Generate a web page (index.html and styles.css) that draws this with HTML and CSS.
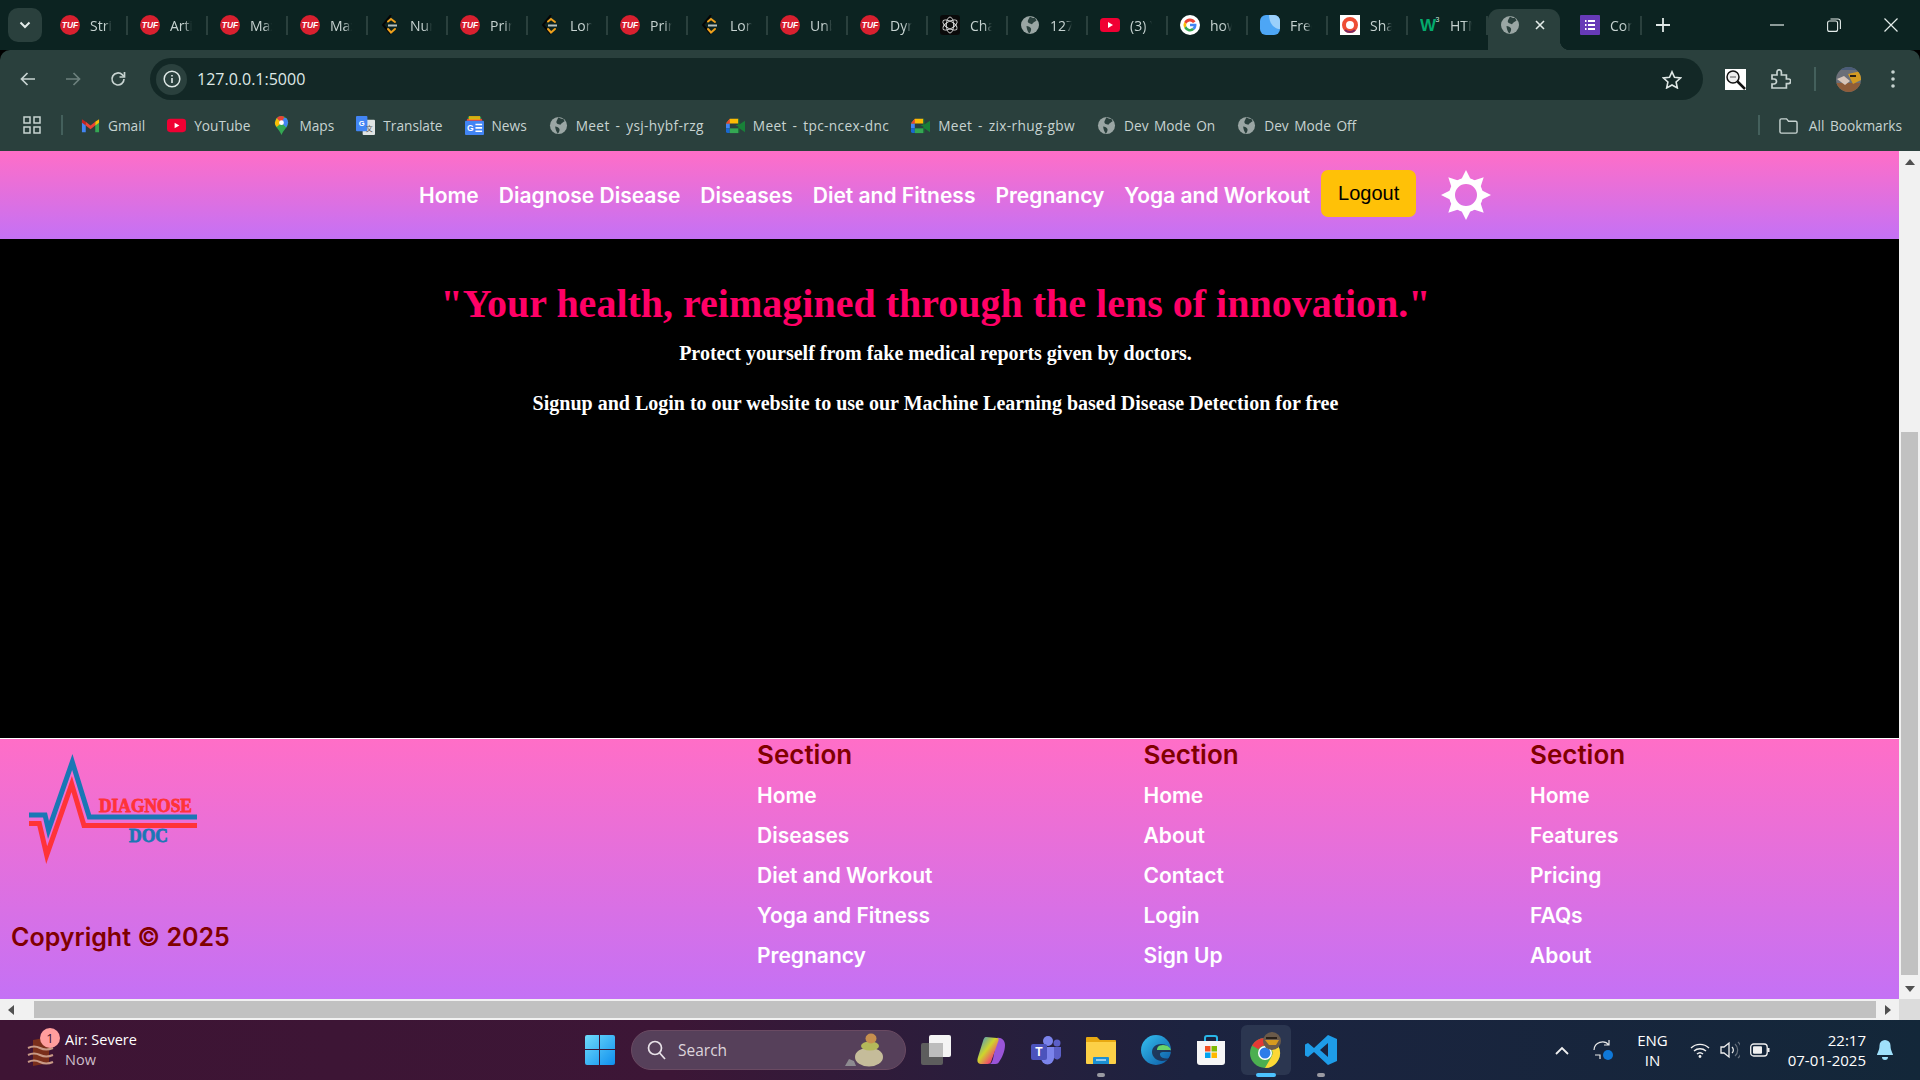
FILE: index.html
```html
<!DOCTYPE html>
<html lang="en">
<head>
<meta charset="utf-8">
<title>Diagnose Doc</title>
<link rel="stylesheet" href="styles.css">
</head>
<body>
<svg class="defs" width="0" height="0" aria-hidden="true">
  <symbol id="tuf" viewBox="0 0 20 20"><circle cx="10" cy="10" r="10" fill="#d8202f"/><text x="10" y="13" text-anchor="middle" font-family="Liberation Sans" font-weight="700" font-style="italic" font-size="8.500" fill="#fff">TUF</text></symbol>
  <symbol id="lc" viewBox="0 0 20 20"><path d="M11 0 3 10l8 9" fill="none" stroke="#050505" stroke-width="2"/><path d="M8 6.500l3-2.500 4 3M8 14l3 3.500 4-3.500" fill="none" stroke="#f0a11c" stroke-width="2" stroke-linecap="round"/><path d="M8 10.500h9" stroke="#b9c2c0" stroke-width="2"/></symbol>
  <symbol id="globe" viewBox="0 0 20 20"><circle cx="10" cy="10" r="9" fill="#9aa6a4"/><path d="M10 1.400c2 1.500 3.600 1.800 5 1.600l1.500 2.500c-2 1.300-3.600 2-4.500 3.800-1-.7-2.800-.5-3.800-1.800C7 6 9 3.600 10 1.400zM6.500 11c2 .2 3.800 1 4.500 2.600.5 1.800-.6 3.600-1.700 5C7.600 16.600 6.600 13.500 6.500 11z" fill="#2a403d"/></symbol>
  <symbol id="yt" viewBox="0 0 20 20"><rect y="3" width="20" height="14" rx="3.500" fill="#f00033"/><path d="M8 7l5 3-5 3z" fill="#fff"/></symbol>
  <symbol id="google" viewBox="0 0 20 20"><circle cx="10" cy="10" r="10" fill="#fff"/><path d="M15.500 6.600A6.500 6.500 0 0 0 4.200 7l2.200 1.700A3.800 3.800 0 0 1 13 8z" fill="#ea4335"/><path d="M4.200 7a6.500 6.500 0 0 0 0 6l2.200-1.800a3.800 3.800 0 0 1 0-2.500z" fill="#fbbc05"/><path d="M4.200 13a6.500 6.500 0 0 0 10.200 1.800l-2.100-1.700A3.800 3.800 0 0 1 6.400 11.200z" fill="#34a853"/><path d="M16.400 8.700H10v2.600h3.700a3.400 3.400 0 0 1-1.400 1.800l2.100 1.700c1.500-1.400 2.400-3.600 2-6.100z" fill="#4285f4"/></symbol>
  <symbol id="gpt" viewBox="0 0 20 20"><rect width="20" height="20" rx="3" fill="#0a0a0a"/><g fill="none" stroke="#dcdcdc" stroke-width=".9"><ellipse cx="10" cy="10" rx="3.600" ry="8"/><ellipse cx="10" cy="10" rx="3.600" ry="8" transform="rotate(60 10 10)"/><ellipse cx="10" cy="10" rx="3.600" ry="8" transform="rotate(120 10 10)"/></g></symbol>
  <symbol id="fre" viewBox="0 0 20 20"><rect width="20" height="20" rx="6" fill="#4da6f5"/><path d="M9 0h5a6 6 0 0 1 6 6v8c-6 0-11-6-11-14z" fill="#9bd0fb"/></symbol>
  <symbol id="sha" viewBox="0 0 20 20"><rect width="20" height="20" fill="#fff"/><circle cx="10" cy="10" r="6" fill="none" stroke="#ee4e34" stroke-width="4"/><path d="M5 15a7 7 0 0 0 10 0" fill="none" stroke="#7d2a63" stroke-width="2"/></symbol>
  <symbol id="w3" viewBox="0 0 20 20"><text x="0" y="16" font-family="Liberation Sans" font-weight="700" font-size="17" fill="#04aa6d">W</text><text x="15.500" y="7" font-family="Liberation Sans" font-size="7" fill="#cfe8df">3</text></symbol>
  <symbol id="forms" viewBox="0 0 20 20"><rect width="20" height="20" rx="1" fill="#673ab7"/><path d="M8 6h7M8 10h7M8 14h7M5 6h1.500M5 10h1.500M5 14h1.500" stroke="#fff" stroke-width="1.800"/></symbol>
  <symbol id="gmail" viewBox="0 0 20 20"><path d="M1 5v12h4V9z" fill="#4285f4"/><path d="M15 9v8h4V5z" fill="#34a853"/><path d="M1 3.500 5 6v4L1 7z" fill="#c5221f"/><path d="M5 6l5 4 5-4v4l-5 4-5-4z" fill="#ea4335"/><path d="M15 6l4-2.500V7l-4 3z" fill="#fbbc04"/></symbol>
  <symbol id="maps" viewBox="0 0 20 20"><path d="M10 0a7 7 0 0 0-7 7c0 5 5 7 7 13 2-6 7-8 7-13a7 7 0 0 0-7-7z" fill="#34a853"/><path d="M5 2 15 12l2-5a7 7 0 0 0-2-5z" fill="#4285f4"/><path d="M5 2 3 7c0 2 1 3 2 4.500L10 7z" fill="#fbbc04"/><path d="M5 2a7 7 0 0 1 8-1L10 7z" fill="#ea4335"/><circle cx="10" cy="7" r="2.500" fill="#fff"/></symbol>
  <symbol id="translate" viewBox="0 0 20 20"><rect x="7" y="4" width="13" height="16" rx="1" fill="#dfe3e3"/><rect width="12" height="16" rx="1" fill="#4285f4"/><text x="6" y="11" text-anchor="middle" font-family="Liberation Sans" font-weight="700" font-size="8" fill="#fff">G</text><text x="14" y="16" text-anchor="middle" font-family="Noto Sans CJK SC" font-size="7" fill="#555">文</text></symbol>
  <symbol id="news" viewBox="0 0 20 20"><path d="M3 1h14v5H3z" fill="#0c9d58"/><path d="M2 3h16v5H2z" fill="#ea4335"/><path d="M4 0h12v4H4z" fill="#fbbc04" opacity=".8"/><rect y="5" width="20" height="15" rx="1" fill="#4285f4"/><text x="5.500" y="16" text-anchor="middle" font-family="Liberation Sans" font-weight="700" font-size="9" fill="#fff">G</text><path d="M11 9h7M11 12.500h7M11 16h7" stroke="#fff" stroke-width="1.600"/></symbol>
  <symbol id="meet" viewBox="0 0 20 20"><path d="M4 3h9v5H0z" fill="#fbbc04"/><path d="M0 8h4v5H0z" fill="#4285f4"/><path d="M0 13h4v5H2a2 2 0 0 1-2-2z" fill="#1967d2"/><path d="M4 13h9v5H4z" fill="#34a853"/><path d="M13 3v6l-3 1 3 1v7a1 1 0 0 0 1-1v-4l6 4V5l-6 4V4a1 1 0 0 0-1-1z" fill="#188038"/><path d="M4 3 0 8h4z" fill="#ea4335"/></symbol>
</svg>

<div class="browser">
  <header class="tabstrip">
    <button class="tab-menu" type="button"><svg width="12" height="8" viewBox="0 0 12 8"><path d="M1.500 1.500 6 6l4.500-4.500" fill="none" stroke="#e4ecea" stroke-width="2"/></svg></button>
    <div class="tab"><svg class="fav"><use href="#tuf"/></svg><span class="tab-title">Striver</span></div>
    <div class="tab"><svg class="fav"><use href="#tuf"/></svg><span class="tab-title">Articles</span></div>
    <div class="tab"><svg class="fav"><use href="#tuf"/></svg><span class="tab-title">Maximum</span></div>
    <div class="tab"><svg class="fav"><use href="#tuf"/></svg><span class="tab-title">Maximum</span></div>
    <div class="tab"><svg class="fav"><use href="#lc"/></svg><span class="tab-title">Number</span></div>
    <div class="tab"><svg class="fav"><use href="#tuf"/></svg><span class="tab-title">Print</span></div>
    <div class="tab"><svg class="fav"><use href="#lc"/></svg><span class="tab-title">Longest</span></div>
    <div class="tab"><svg class="fav"><use href="#tuf"/></svg><span class="tab-title">Print</span></div>
    <div class="tab"><svg class="fav"><use href="#lc"/></svg><span class="tab-title">Longest</span></div>
    <div class="tab"><svg class="fav"><use href="#tuf"/></svg><span class="tab-title">Unbounded</span></div>
    <div class="tab"><svg class="fav"><use href="#tuf"/></svg><span class="tab-title">Dynamic</span></div>
    <div class="tab"><svg class="fav"><use href="#gpt"/></svg><span class="tab-title">ChatGPT</span></div>
    <div class="tab"><svg class="fav"><use href="#globe"/></svg><span class="tab-title">127.0.0.1</span></div>
    <div class="tab"><svg class="fav"><use href="#yt"/></svg><span class="tab-title">(3) YouTube</span></div>
    <div class="tab"><svg class="fav"><use href="#google"/></svg><span class="tab-title">how to</span></div>
    <div class="tab"><svg class="fav"><use href="#fre"/></svg><span class="tab-title">Free</span></div>
    <div class="tab"><svg class="fav"><use href="#sha"/></svg><span class="tab-title">Share</span></div>
    <div class="tab"><svg class="fav"><use href="#w3"/></svg><span class="tab-title">HTML</span></div>
    <div class="tab tab-active"><svg class="fav"><use href="#globe"/></svg><svg class="tab-close" width="10" height="10" viewBox="0 0 10 10"><path d="M1 1l8 8M9 1 1 9" stroke="#e4ecea" stroke-width="1.600"/></svg></div>
    <div class="tab tab-last"><svg class="fav"><use href="#forms"/></svg><span class="tab-title">Contact</span></div>
    <svg class="new-tab" width="14" height="14" viewBox="0 0 14 14"><path d="M7 0v14M0 7h14" stroke="#dfe8e6" stroke-width="1.800"/></svg>
    <div class="win-controls">
      <svg width="14" height="14" viewBox="0 0 14 14"><path d="M0 7h14" stroke="#e4ecea" stroke-width="1.200"/></svg>
      <svg width="14" height="14" viewBox="0 0 14 14"><rect x=".6" y="3" width="10" height="10.400" rx="2" fill="none" stroke="#e4ecea" stroke-width="1.100"/><path d="M3.500 1h7.500a2.400 2.400 0 0 1 2.400 2.400V11" fill="none" stroke="#e4ecea" stroke-width="1.100"/></svg>
      <svg width="14" height="14" viewBox="0 0 14 14"><path d="M.5.500l13 13M13.500.500l-13 13" stroke="#e4ecea" stroke-width="1.200"/></svg>
    </div>
  </header>

  <div class="toolbar">
    <svg class="tool-back" width="16" height="14" viewBox="0 0 16 14"><path d="M15 7H2M7.500 1 1.500 7l6 6" fill="none" stroke="#c7d3d1" stroke-width="1.700"/></svg>
    <svg class="tool-fwd" width="16" height="14" viewBox="0 0 16 14"><path d="M1 7h13M8.500 1l6 6-6 6" fill="none" stroke="#6d807d" stroke-width="1.700"/></svg>
    <svg class="tool-reload" width="16" height="16" viewBox="0 0 16 16"><path d="M14 8a6 6 0 1 1-1.800-4.300L14 5.500" fill="none" stroke="#c7d3d1" stroke-width="1.700"/><path d="M14.500 1v5h-5" fill="none" stroke="#c7d3d1" stroke-width="1.700"/></svg>
    <div class="omnibox">
      <span class="info-chip"><svg width="18" height="18" viewBox="0 0 18 18"><circle cx="9" cy="9" r="7.800" fill="none" stroke="#dfe8e6" stroke-width="1.500"/><path d="M9 8v5M9 5v1.600" stroke="#dfe8e6" stroke-width="1.600"/></svg></span>
      <span class="url">127.0.0.1:5000</span>
      <svg class="star" width="20" height="19" viewBox="0 0 20 19"><path d="M10 1.800l2.500 5.500 6 .7-4.400 4 1.200 5.900L10 15l-5.300 2.900 1.200-5.900-4.400-4 6-.7z" fill="none" stroke="#dfe8e6" stroke-width="1.600"/></svg>
    </div>
    <svg class="ext-lens" width="21" height="21" viewBox="0 0 21 21"><rect width="21" height="21" fill="#fff"/><circle cx="8" cy="8" r="6" fill="#eee" stroke="#111" stroke-width="1.500"/><path d="M12.500 12.500 20 20" stroke="#111" stroke-width="2.500"/><path d="M5 8h6" stroke="#555"/></svg>
    <svg class="ext-puzzle" width="20" height="20" viewBox="0 0 20 20"><path d="M1 6h5V3a2.200 2.200 0 0 1 4.400 0v3h5v4h2a2.300 2.300 0 0 1 0 4.600h-2V19H1v-4h2a2.500 2.500 0 0 0 0-5H1z" fill="none" stroke="#c7d3d1" stroke-width="1.700"/></svg>
    <span class="tool-sep"></span>
    <svg class="avatar" width="25" height="25" viewBox="0 0 25 25"><defs><clipPath id="av"><circle cx="12.500" cy="12.500" r="12.500"/></clipPath></defs><g clip-path="url(#av)"><rect width="25" height="25" fill="#6b6f78"/><path d="M0 16h25v9H0z" fill="#8f5d3a"/><path d="M12 7l13-3v9l-8 4z" fill="#d39a22"/><path d="M1 12l7-3 6 5-5 4z" fill="#d8c6ba"/><path d="M14 8h6v2h-6z" fill="#2a2018"/><path d="M5 0h15v3H5z" fill="#4a5c78"/></g></svg>
    <svg class="tool-dots" width="4" height="18" viewBox="0 0 4 18"><circle cx="2" cy="2" r="1.800" fill="#c7d3d1"/><circle cx="2" cy="9" r="1.800" fill="#c7d3d1"/><circle cx="2" cy="16" r="1.800" fill="#c7d3d1"/></svg>
  </div>

  <nav class="bookmarks">
    <svg class="bm-apps" width="18" height="18" viewBox="0 0 18 18"><path d="M1 1h6v6H1zM11 1h6v6h-6zM1 11h6v6H1zM11 11h6v6h-6z" fill="none" stroke="#c7d3d1" stroke-width="1.500"/></svg>
    <span class="bm-sep"></span>
    <a class="bm"><svg class="bm-ic"><use href="#gmail"/></svg>Gmail</a>
    <a class="bm"><svg class="bm-ic"><use href="#yt"/></svg>YouTube</a>
    <a class="bm"><svg class="bm-ic"><use href="#maps"/></svg>Maps</a>
    <a class="bm"><svg class="bm-ic"><use href="#translate"/></svg>Translate</a>
    <a class="bm"><svg class="bm-ic"><use href="#news"/></svg>News</a>
    <a class="bm bm-meet"><svg class="bm-ic"><use href="#globe"/></svg>Meet - ysj-hybf-rzg</a>
    <a class="bm bm-meet"><svg class="bm-ic"><use href="#meet"/></svg>Meet - tpc-ncex-dnc</a>
    <a class="bm bm-meet"><svg class="bm-ic"><use href="#meet"/></svg>Meet - zix-rhug-gbw</a>
    <a class="bm"><svg class="bm-ic"><use href="#globe"/></svg>Dev Mode On</a>
    <a class="bm"><svg class="bm-ic"><use href="#globe"/></svg>Dev Mode Off</a>
    <span class="bm-sep bm-sep-end"></span>
    <a class="bm bm-all"><svg class="bm-ic" viewBox="0 0 20 18"><path d="M1 3.500A1.500 1.500 0 0 1 2.500 2H8l2 2.500h7.500A1.500 1.500 0 0 1 19 6v9.500a1.500 1.500 0 0 1-1.500 1.500h-15A1.500 1.500 0 0 1 1 15.500z" fill="none" stroke="#c7d3d1" stroke-width="1.500"/></svg>All Bookmarks</a>
  </nav>

  <div class="viewport">
    <div class="viewport-row">
      <main class="page">
        <div class="site-nav">
          <a class="nav-link">Home</a>
          <a class="nav-link">Diagnose Disease</a>
          <a class="nav-link">Diseases</a>
          <a class="nav-link">Diet and Fitness</a>
          <a class="nav-link">Pregnancy</a>
          <a class="nav-link">Yoga and Workout</a>
          <button class="logout" type="button">Logout</button>
          <svg class="sun" width="50" height="50" viewBox="0 0 50 50">
            <g fill="#fff">
              <path d="M25 0l5 10H20z"/><path d="M25 50l5-10H20z"/><path d="M0 25l10-5v10z"/><path d="M50 25l-10-5v10z"/>
              <path d="M7.300 7.300l10.600 3.500-7.100 7.100z"/><path d="M42.700 7.300l-3.500 10.600-7.100-7.100z"/><path d="M7.300 42.700l3.500-10.600 7.100 7.100z"/><path d="M42.700 42.700l-10.600-3.500 7.100-7.100z"/>
            </g>
            <circle cx="25" cy="25" r="14" fill="none" stroke="#fff" stroke-width="6"/>
          </svg>
        </div>
        <section class="hero">
          <h1 class="hero-title">"Your health, reimagined through the lens of innovation."</h1>
          <p class="hero-text">Protect yourself from fake medical reports given by doctors.</p>
          <p class="hero-text">Signup and Login to our website to use our Machine Learning based Disease Detection for free</p>
        </section>
        <footer class="site-footer">
          <div class="foot-brand">
            <svg class="logo" width="168" height="108" viewBox="0 0 168 108">
              <polyline class="logo-line" points="0,61 16,61 19.500,76 43.300,8 60.300,63 168,63" stroke="#1a77b5"/>
              <polyline class="logo-line" points="0,69.500 10.300,69.500 17.700,101 42.700,30 55,71.500 168,71.500" stroke="#ff3338"/>
              <text class="logo-a" x="70" y="58" textLength="93" lengthAdjust="spacingAndGlyphs">DIAGNOSE</text>
              <text class="logo-b" x="100" y="88" textLength="39" lengthAdjust="spacingAndGlyphs">DOC</text>
            </svg>
            <p class="copyright">Copyright © 2025</p>
          </div>
          <div class="foot-col">
            <h3 class="foot-head">Section</h3>
            <a class="foot-link">Home</a><a class="foot-link">Diseases</a><a class="foot-link">Diet and Workout</a><a class="foot-link">Yoga and Fitness</a><a class="foot-link">Pregnancy</a>
          </div>
          <div class="foot-col">
            <h3 class="foot-head">Section</h3>
            <a class="foot-link">Home</a><a class="foot-link">About</a><a class="foot-link">Contact</a><a class="foot-link">Login</a><a class="foot-link">Sign Up</a>
          </div>
          <div class="foot-col">
            <h3 class="foot-head">Section</h3>
            <a class="foot-link">Home</a><a class="foot-link">Features</a><a class="foot-link">Pricing</a><a class="foot-link">FAQs</a><a class="foot-link">About</a>
          </div>
        </footer>
      </main>
      <div class="vscroll">
        <span class="arrow-up"></span>
        <div class="vtrack"><div class="vthumb"></div></div>
        <span class="arrow-down"></span>
      </div>
    </div>
    <div class="hscroll">
      <span class="arrow-left"></span>
      <div class="hthumb"></div>
      <span class="arrow-right"></span>
      <span class="corner"></span>
    </div>
  </div>

  <footer class="taskbar">
    <div class="weather">
      <span class="weather-ic">
        <svg width="28" height="34" viewBox="0 0 28 34"><path d="M6 5 22 2v26L6 31z" fill="#7a2f1b"/><path d="M1 13q6-3 12 0t13 0M1 20q6-3 12 0t13 0M1 27q6-3 12 0t13 0" fill="none" stroke="#c99a86" stroke-width="2"/></svg>
        <b class="badge">1</b>
      </span>
      <span class="weather-text"><span class="w1">Air: Severe</span><span class="w2">Now</span></span>
    </div>
    <div class="tb-center">
      <svg class="start" width="30" height="30" viewBox="0 0 30 30"><defs><linearGradient id="wg" x1="0" y1="0" x2="1" y2="1"><stop offset="0" stop-color="#6fdcfb"/><stop offset="1" stop-color="#0f8fee"/></linearGradient></defs><path d="M0 2a2 2 0 0 1 2-2h12v14H0zM15 0h13a2 2 0 0 1 2 2v12H15zM0 15h14v15H2a2 2 0 0 1-2-2zM15 15h15v13a2 2 0 0 1-2 2H15z" fill="url(#wg)"/></svg>
      <div class="searchbox">
        <svg width="19" height="20" viewBox="0 0 19 20"><circle cx="8" cy="8" r="6.500" fill="none" stroke="#e8e2e8" stroke-width="1.700"/><path d="M12.700 13 18 19" stroke="#e8e2e8" stroke-width="1.700"/></svg>
        <span class="search-label">Search</span>
        <svg class="pebbles" width="42" height="34" viewBox="0 0 42 34"><ellipse cx="26" cy="24" rx="14" ry="9.500" fill="#c5bc9a"/><ellipse cx="27" cy="13" rx="9" ry="4.500" fill="#b4b85a"/><ellipse cx="28" cy="5.500" rx="5.500" ry="5" fill="#c68f4e"/><path d="M2 33l4-7 5 2 2 5z" fill="#8d8a90"/></svg>
      </div>
      <span class="tb-app"><svg width="30" height="30" viewBox="0 0 30 30"><rect y="8" width="22" height="22" rx="2" fill="#5d5d5d"/><rect x="8" width="22" height="22" rx="2" fill="#f4f4f4"/><rect x="8" y="8" width="14" height="14" fill="#bdbdbd"/></svg></span>
      <span class="tb-app"><svg width="30" height="30" viewBox="0 0 30 30"><defs><linearGradient id="cp" x1="0" y1="0" x2="1" y2="1"><stop offset="0" stop-color="#2b8be8"/><stop offset=".45" stop-color="#cfd52c"/><stop offset=".75" stop-color="#f04a6c"/><stop offset="1" stop-color="#f08a3c"/></linearGradient></defs><path d="M21 3c4-1 8 2 8 7 0 6-3 13-6 17-1 2-3 2-5 2h-5c3 0 3-3 4-5z" fill="#9a55d8"/><path d="M21 3c2 0 2 2 1 4l-7 20c-1 2-3 2-5 2H5c-4 0-4-4-3-7L7 6c.5-2 1.500-4 3-4z" fill="url(#cp)"/></svg></span>
      <span class="tb-app"><svg width="30" height="30" viewBox="0 0 30 30"><circle cx="17" cy="6" r="5" fill="#7b83eb"/><circle cx="26" cy="8" r="3.500" fill="#5b5fc7"/><path d="M10 12h13v11a6.500 6.500 0 0 1-13 0z" fill="#7b83eb"/><path d="M23 12h7v9a4 4 0 0 1-7 2z" fill="#5b5fc7"/><rect y="9" width="16" height="16" rx="2" fill="#4b53bc"/><text x="8" y="21" text-anchor="middle" font-family="Liberation Sans" font-weight="700" font-size="12" fill="#fff">T</text></svg></span>
      <span class="tb-app tb-dot"><svg width="30" height="30" viewBox="0 0 30 30"><path d="M0 3a1 1 0 0 1 1-1h10l3 3h15a1 1 0 0 1 1 1v4H0z" fill="#e8a912"/><path d="M0 7h30v21a1 1 0 0 1-1 1H1a1 1 0 0 1-1-1z" fill="#fcd047"/><path d="M8 22h14a1 1 0 0 1 1 1v6H7v-6a1 1 0 0 1 1-1z" fill="#1b8fd2"/><path d="M10 25h10" stroke="#bfe2f7" stroke-width="1.500"/></svg></span>
      <span class="tb-app"><svg width="30" height="30" viewBox="0 0 30 30"><defs><linearGradient id="ed" x1="0" y1="0" x2="1" y2="1"><stop offset="0" stop-color="#35c1f1"/><stop offset="1" stop-color="#0c59a4"/></linearGradient></defs><circle cx="15" cy="15" r="15" fill="url(#ed)"/><path d="M30 17c0-5-5-8-10-8-6 0-9 4-9 8 0 5 5 9 10 9 3 0 6-1 8-3-3 1-9 1-10-3-.5-2 1-3 3-3z" fill="#1f2a4a" opacity=".85"/><path d="M30 16c0-3-3-6-8-6s-6 3-6 5h14z" fill="#6ad46a"/></svg></span>
      <span class="tb-app"><svg width="30" height="30" viewBox="0 0 30 30"><path d="M9 7V3a2 2 0 0 1 2-2h8a2 2 0 0 1 2 2v4" fill="none" stroke="#29b6e8" stroke-width="2"/><path d="M1 6h28v21a3 3 0 0 1-3 3H4a3 3 0 0 1-3-3z" fill="#f6f6f6"/><rect x="9" y="11" width="5.500" height="5.500" fill="#f25022"/><rect x="15.500" y="11" width="5.500" height="5.500" fill="#7fba00"/><rect x="9" y="17.500" width="5.500" height="5.500" fill="#00a4ef"/><rect x="15.500" y="17.500" width="5.500" height="5.500" fill="#ffb900"/></svg></span>
      <span class="tb-app tb-chrome"><svg width="32" height="36" viewBox="0 0 32 36"><circle cx="15" cy="21" r="15" fill="#4caf50"/><path d="M15 6a15 15 0 0 1 13 7.500H15a7.500 7.500 0 0 0-6.500 3.800L2 13.500A15 15 0 0 1 15 6z" fill="#e53935"/><path d="M28 13.500A15 15 0 0 1 15 36l6.500-11.300A7.500 7.500 0 0 0 21.500 17z" fill="#fdd835"/><circle cx="15" cy="21" r="7" fill="#fff"/><circle cx="15" cy="21" r="5.500" fill="#2b7de9"/><circle cx="22" cy="9" r="9" fill="#6a5a4a"/><path d="M15 8h14l-3 5h-7z" fill="#d69a1f"/><path d="M16 5h11v2H16z" fill="#2a2018"/></svg></span>
      <span class="tb-app tb-dot"><svg width="32" height="32" viewBox="0 0 32 32"><path d="M23 1 32 5v22l-9 4-14-13-6 5-3-1.500V10.500L3 9l6 5zM23 9l-8 7 8 7z" fill="#1e9ce8"/></svg></span>
    </div>
    <div class="tray">
      <svg class="t-chev" width="14" height="9" viewBox="0 0 14 9"><path d="M1 8l6-6 6 6" fill="none" stroke="#f0f0f0" stroke-width="1.800"/></svg>
      <svg class="t-sync" width="22" height="22" viewBox="0 0 22 22"><path d="M2 11a8.500 8.500 0 0 1 15-5M17 1v5h-5M3 16h5v4" fill="none" stroke="#e8e8e8" stroke-width="1.200"/><circle cx="16" cy="16" r="5" fill="#0f78d8"/></svg>
      <span class="t-lang"><span>ENG</span><span>IN</span></span>
      <svg class="t-ic" width="20" height="16" viewBox="0 0 20 16"><path d="M1 6a13 13 0 0 1 18 0M4 9a9 9 0 0 1 12 0M7 12a4.500 4.500 0 0 1 6 0" fill="none" stroke="#f0f0f0" stroke-width="1.400"/><circle cx="10" cy="14.500" r="1.400" fill="#f0f0f0"/></svg>
      <svg class="t-ic" width="20" height="18" viewBox="0 0 20 18"><path d="M1 6h3l5-4v14l-5-4H1z" fill="none" stroke="#f0f0f0" stroke-width="1.300"/><path d="M12 6a4 4 0 0 1 0 6" fill="none" stroke="#f0f0f0" stroke-width="1.200"/><path d="M15 3a8 8 0 0 1 0 12M18 1a11 11 0 0 1 0 16" fill="none" stroke="#66707c" stroke-width="1.200"/></svg>
      <svg class="t-ic" width="20" height="14" viewBox="0 0 20 14"><rect x=".7" y="1" width="16.500" height="12" rx="3" fill="none" stroke="#f0f0f0" stroke-width="1.300"/><rect x="3" y="3.300" width="9" height="7.400" rx="1" fill="#f0f0f0"/><path d="M18.500 5v4" stroke="#f0f0f0" stroke-width="2"/></svg>
      <span class="t-clock"><span>22:17</span><span>07-01-2025</span></span>
      <svg class="t-bell" width="16" height="20" viewBox="0 0 16 20"><path d="M8 0a5.500 5.500 0 0 1 5.500 5.500c0 5 2.500 8 2.500 9.500H0c0-1.500 2.500-4.500 2.500-9.500A5.500 5.500 0 0 1 8 0z" fill="#9fe0fb"/><path d="M5 17h6a3 3 0 0 1-6 0z" fill="#9fe0fb"/></svg>
    </div>
  </footer>
</div>
</body>
</html>
```

FILE: styles.css
```css
* { box-sizing: border-box; }
html, body { margin: 0; height: 100%; overflow: hidden; background: #000; }
.defs { position: absolute; }
a { color: inherit; text-decoration: none; }

.browser { display: flex; flex-direction: column; width: 1920px; height: 1080px; font-family: "Open Sans", "Noto Sans", sans-serif; }

/* Tab strip */
.tabstrip { display: flex; align-items: flex-end; height: 50px; flex: none; background: #0c2321; padding-left: 8px; }
.tab-menu { display: flex; align-items: center; justify-content: center; width: 34px; height: 34px; margin: 0 6px 8px 0; padding: 0; border: 0; border-radius: 10px; background: #2a403d; }
.tab { position: relative; display: flex; align-items: center; flex: none; width: 80px; height: 41px; padding: 0 0 9px 12px; gap: 10px; color: #c7d3d1; font-size: 14px; }
.tab::after { content: ""; position: absolute; right: 0; top: 7px; width: 2px; height: 19px; background: #2a403d; }
.fav { flex: none; width: 20px; height: 20px; }
.tab-title { width: 22px; overflow: hidden; white-space: nowrap; -webkit-mask-image: linear-gradient(90deg, #000 65%, transparent); mask-image: linear-gradient(90deg, #000 65%, transparent); }
.tab-active { width: 72px; margin-right: 8px; background: #2a403d; border-radius: 11px 11px 0 0; gap: 0; justify-content: space-between; padding-right: 15px; }
.tab-active::after { display: none; }
.tab-active::before { content: ""; position: absolute; right: -10px; bottom: 0; width: 10px; height: 10px; background: radial-gradient(circle at 100% 0, transparent 10px, #2a403d 10.500px); }
.tab-last { width: 74px; }
.new-tab { margin: 0 0 18px 14px; flex: none; }
.win-controls { display: flex; gap: 43px; margin: 0 22px 18px auto; }

/* Toolbar */
.toolbar { display: flex; align-items: center; height: 50px; flex: none; background: #2a403d; border-radius: 10px 10px 0 0; padding: 8px 0 0 20px; }
.tool-back { margin-right: 29px; }
.tool-fwd { margin-right: 29px; }
.tool-reload { margin-right: 24px; }
.omnibox { display: flex; align-items: center; width: 1553px; height: 42px; border-radius: 21px; background: #132826; padding: 0 21px 0 6px; }
.info-chip { display: flex; align-items: center; justify-content: center; width: 31px; height: 31px; border-radius: 50%; background: #2a403d; }
.url { margin-left: 10px; color: #dfe8e6; font-size: 16px; }
.star { margin-left: auto; }
.ext-lens { margin-left: 22px; }
.ext-puzzle { margin-left: 25px; }
.tool-sep { width: 2px; height: 24px; margin: 0 20px 0 23px; background: #44605c; }
.avatar { flex: none; }
.tool-dots { margin-left: 30px; }

/* Bookmarks */
.bookmarks { display: flex; align-items: center; height: 51px; flex: none; background: #2a403d; padding: 0 18px 1px 23px; color: #c7d3d1; font-size: 13.700px; word-spacing: 2px; }
.bm-apps { flex: none; }
.bm-sep { width: 2px; height: 20px; margin: 0 18px 0 20px; background: #44605c; }
.bm { display: flex; align-items: center; gap: 8px; margin-right: 22px; white-space: nowrap; }
.bm-meet { letter-spacing: .35px; }
.bm-ic { width: 19px; height: 19px; flex: none; }
.bm-sep-end { margin: 0 19px 0 auto; }
.bm-all { margin-right: 0; gap: 11px; }

/* Viewport */
.viewport { display: flex; flex-direction: column; flex: 1; min-height: 0; }
.viewport-row { display: flex; flex: 1; min-height: 0; }
.page { display: flex; flex-direction: column; flex: 1; min-width: 0; background: #000; font-family: Inter, "Noto Sans", sans-serif; }

.site-nav { display: flex; align-items: center; justify-content: flex-start; height: 88px; flex: none; padding-left: 419px; background: linear-gradient(180deg, #ff6ec7, #c471f5); }
.nav-link { margin-right: 20px; color: #fff; font-size: 21px; font-weight: 600; white-space: nowrap; }
.logout { width: 95px; height: 47px; margin: -3px 25px 0 -9px; border: 0; border-radius: 7px; background: #ffc107; color: #000; font-family: "Liberation Sans", sans-serif; font-size: 20px; }
.sun { flex: none; }

.hero { flex: 1; padding-top: 40px; padding-right: 28px; color: #fff; font-family: "Liberation Serif", serif; text-align: center; }
.hero-title { margin: 0 0 13px; color: #ff0066; font-size: 40px; font-weight: 700; line-height: 50px; }
.hero-text { margin: 0 0 27px; font-size: 20px; font-weight: 700; line-height: 23px; }

.site-footer { display: flex; height: 261px; flex: none; border-top: 1px solid #fff; background: linear-gradient(180deg, #ff6ec7, #c471f5); }
.foot-brand { display: flex; flex-direction: column; width: 757px; flex: none; padding: 15px 0 0 29px; }
.logo { flex: none; overflow: visible; }
.logo-line { fill: none; stroke-width: 5px; stroke-miterlimit: 8; }
.logo-a, .logo-b { font-family: "Liberation Serif", serif; font-size: 18px; font-weight: 700; stroke-width: .8px; }
.logo-a { fill: #ff3338; stroke: #ff3338; }
.logo-b { fill: #1a77b5; stroke: #1a77b5; }
.copyright { margin: 58px 0 0 -18px; color: #800000; font-size: 25px; font-weight: 600; line-height: 34px; }
.foot-col { display: flex; flex-direction: column; width: 386.500px; flex: none; padding-top: 1px; }
.foot-head { margin: 0; color: #800000; font-size: 26px; font-weight: 600; line-height: 30px; }
.foot-link { margin-top: 10px; color: #fff; font-size: 21px; font-weight: 600; line-height: 30px; }
.foot-head + .foot-link { margin-top: 11px; }

/* Scrollbars */
.vscroll { display: flex; flex-direction: column; width: 21px; flex: none; background: #f1f1f1; }
.vtrack { flex: 1; padding-top: 260px; }
.vthumb { height: 543px; margin: 0 2px; background: #c1c1c1; }
.arrow-up, .arrow-down { display: flex; align-items: center; justify-content: center; height: 21px; flex: none; }
.arrow-up::before { content: ""; border: 5px solid transparent; border-top: 0; border-bottom: 6px solid #505050; }
.arrow-down::before { content: ""; border: 5px solid transparent; border-bottom: 0; border-top: 6px solid #505050; }
.hscroll { display: flex; align-items: stretch; height: 21px; flex: none; background: #f1f1f1; }
.hthumb { width: 1842px; margin: 2px 0; background: #c1c1c1; }
.arrow-left, .arrow-right { display: flex; align-items: center; justify-content: center; width: 34px; flex: none; }
.arrow-left { padding-right: 13px; }
.arrow-right { width: 23px; }
.arrow-left::before { content: ""; border: 5px solid transparent; border-left: 0; border-right: 6px solid #505050; }
.arrow-right::before { content: ""; border: 5px solid transparent; border-right: 0; border-left: 6px solid #505050; }
.corner { width: 21px; flex: none; background: #dcdcdc; }

/* Taskbar */
.taskbar { position: relative; display: flex; align-items: center; height: 60px; flex: none; background: linear-gradient(90deg, #3e1434 0%, #3c1636 35%, #1c2340 62%, #132739 100%); color: #fff; font-family: "Open Sans", sans-serif; }
.weather { display: flex; align-items: center; gap: 12px; width: 585px; flex: none; padding-left: 27px; }
.weather-ic { position: relative; display: block; width: 26px; height: 34px; margin-top: 4px; }
.badge { position: absolute; top: -7px; right: -7px; width: 20px; height: 20px; border-radius: 50%; background: #ff9d9d; color: #3a1030; font-size: 13px; font-weight: 400; line-height: 20px; text-align: center; }
.weather-text { display: flex; flex-direction: column; font-size: 14.500px; line-height: 20px; }
.w2 { color: #cdbdc9; }
.tb-center { display: flex; align-items: center; }
.start { flex: none; }
.searchbox { display: flex; align-items: center; width: 275px; height: 40px; margin: 0 5px 0 16px; padding: 0 20px 0 15px; border: 1px solid #6a4a62; border-radius: 20px; background: #56405a; }
.search-label { margin-left: 12px; color: #ddd4dc; font-size: 15.500px; }
.pebbles { margin-left: auto; }
.tb-app { position: relative; display: flex; align-items: center; justify-content: center; width: 50px; height: 50px; margin-right: 5px; }
.tb-dot::after { content: ""; position: absolute; bottom: -2px; width: 8px; height: 4px; border-radius: 2px; background: #9a9aa2; }
.tb-chrome { border-radius: 6px; background: #2b3650; }
.tb-chrome::after { content: ""; position: absolute; bottom: -2px; width: 20px; height: 4px; border-radius: 2px; background: #4cc2ff; }
.tray { display: flex; align-items: center; margin-left: auto; padding-right: 27px; }
.t-chev { margin-right: 23px; }
.t-sync { margin-right: 23px; }
.t-lang { display: flex; flex-direction: column; align-items: center; margin-right: 22px; font-size: 15px; line-height: 20px; }
.t-ic { margin-right: 10px; }
.t-clock { display: flex; flex-direction: column; align-items: flex-end; margin: 0 11px 0 8px; font-size: 15px; line-height: 20px; }
.t-bell { flex: none; }
```
